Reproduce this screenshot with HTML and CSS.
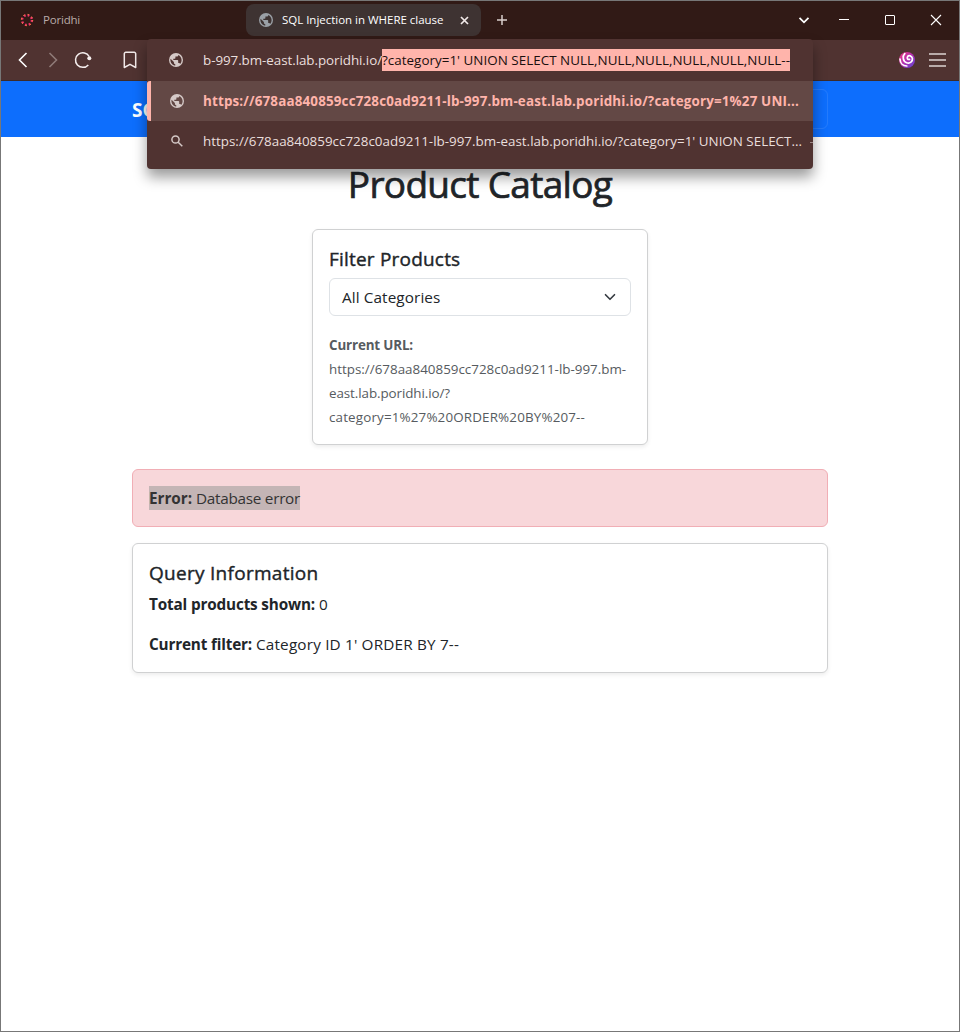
FILE: index.html
```html
<!DOCTYPE html>
<html lang="en">
<head>
<meta charset="utf-8">
<title>SQL Injection in WHERE clause</title>
<link rel="stylesheet" href="styles.css">
</head>
<body>
<div class="window">
  <div class="tabbar">
    <div class="tab tab-first">
      <svg class="ring" width="14" height="14" viewBox="0 0 14 14" fill="none"><circle cx="7" cy="7" r="4.900" stroke="#f0306b" stroke-width="2.300" stroke-dasharray="1.900 1.950"/><circle cx="7" cy="7" r="5.700" stroke="#f58a3c" stroke-width="1" stroke-dasharray="1.400 3.080"/></svg>
      <span class="t-tab1">Poridhi</span>
    </div>
    <div class="tab tab-active">
      <svg width="14" height="14" viewBox="0 0 14 14"><circle cx="7" cy="7" r="7" fill="#9aa0a6"/><path d="M6.300 12.600C3.500 12.300 1.400 9.800 1.400 7l.2-1.200 3.300 3.300v.7c0 .8.600 1.400 1.400 1.400zM11.200 10.900c-.2-.6-.7-1-1.300-1h-.7V7.800c0-.4-.3-.7-.7-.7H4.300V5.700h1.400c.4 0 .7-.3.700-.7V3.600h1.400c.8 0 1.400-.6 1.400-1.400v-.3c2 .8 3.400 2.800 3.400 5.100 0 1.500-.5 2.900-1.400 3.900z" fill="#3e3332"/></svg>
      <span class="t-tab2">SQL Injection in WHERE clause</span>
      <svg class="close" width="9" height="9" viewBox="0 0 9 9" stroke="#f1e9e8" stroke-width="1.700"><path d="M1 1l7 7M8 1l-7 7"/></svg>
    </div>
    <svg class="plus" width="12" height="12" viewBox="0 0 12 12" stroke="#d9cfcd" stroke-width="1.500"><path d="M6 1v10M1 6h10"/></svg>
    <div class="controls">
      <svg class="caret" width="12" height="12" viewBox="0 0 12 12" fill="none" stroke="#fff" stroke-width="1.800"><path d="M1.500 3.800L6 8.300l4.500-4.500"/></svg>
      <svg width="12" height="12" viewBox="0 0 12 12" stroke="#fff"><path d="M1 5.500h10"/></svg>
      <svg width="12" height="12" viewBox="0 0 12 12" fill="none" stroke="#fff"><rect x="1.500" y="1.500" width="9" height="9" rx=".5"/></svg>
      <svg width="12" height="12" viewBox="0 0 12 12" stroke="#fff" stroke-width="1.100"><path d="M1 1l10 10M11 1L1 11"/></svg>
    </div>
  </div>
  <div class="toolbar">
    <svg class="back" width="10" height="16" viewBox="0 0 10 16" fill="none" stroke="#fff" stroke-width="1.600"><path d="M8.500 1L1.500 8l7 7"/></svg>
    <svg class="fwd" width="10" height="16" viewBox="0 0 10 16" fill="none" stroke="#8f7a77" stroke-width="1.600"><path d="M1.500 1l7 7-7 7"/></svg>
    <svg class="reload" width="18" height="18" viewBox="0 0 18 18" fill="none" stroke="#f6efee" stroke-width="1.500"><path d="M15.200 5.500A7.300 7.300 0 1 0 14.300 13.900"/><circle cx="15.300" cy="7.300" r="2" fill="#f6efee" stroke="none"/></svg>
    <svg class="mark" width="14" height="18" viewBox="0 0 14 18" fill="none" stroke="#f1e9e8" stroke-width="1.500" stroke-linejoin="round"><path d="M1.300 16.500V2.800a1.500 1.500 0 0 1 1.500-1.500h8.400a1.500 1.500 0 0 1 1.500 1.500v13.700L7 13.300z"/></svg>
    <div class="right">
      <svg width="16" height="16" viewBox="0 0 16 16" fill="none"><defs><linearGradient id="g" x1="0" y1="0" x2="1" y2="1"><stop offset="0" stop-color="#f03a78"/><stop offset=".5" stop-color="#b32fb2"/><stop offset="1" stop-color="#5848d8"/></linearGradient></defs><circle cx="8" cy="8" r="8" fill="url(#g)"/><path d="M1 7C1.200 11.500 4.200 14 7.800 14M5.800 1.600C3.300 4 3.800 9.300 7.600 10.700c3.400 1.200 6.300-1.400 5.800-4.300S9.600 3 8.600 4.700s.3 3.200 1.900 2.700" stroke="#fff" stroke-width="1.700" stroke-linecap="round"/></svg>
      <svg width="17" height="14" viewBox="0 0 17 14" stroke="#dcd3d1" stroke-width="1.500"><path d="M0 1h17M0 7h17M0 13h17"/></svg>
    </div>
  </div>
  <div class="navbar"><span class="brand">SQ</span><span class="toggler"></span></div>
  <main class="page">
    <h1><span class="t-h1">Product Catalog</span></h1>
    <section class="card filter">
      <h5><span class="t-filter">Filter Products</span></h5>
      <div class="select"><span class="t-all">All Categories</span>
        <svg width="16" height="12" viewBox="0 0 16 16" fill="none" stroke="#343a40" stroke-width="2.200" stroke-linecap="round" stroke-linejoin="round"><path d="m2 5 6 6 6-6"/></svg></div>
      <div class="url">
        <div><b class="t-cur">Current URL:</b></div>
        <div><span>https://678aa840859cc728c0ad9211-lb-997.bm-</span></div>
        <div><span class="t-u2">east.lab.poridhi.io/?</span></div>
        <div><span class="t-u3">category=1%27%20ORDER%20BY%207--</span></div>
      </div>
    </section>
    <div class="alert"><span class="sel"><b class="t-err">Error:</b><span class="t-db">Database error</span></span></div>
    <section class="card info">
      <h5><span class="t-query">Query Information</span></h5>
      <p><b class="t-total">Total products shown:</b><span>0</span></p>
      <p><b class="t-cf">Current filter:</b><span class="t-cat">Category ID 1' ORDER BY 7--</span></p>
    </section>
  </main>
  <div class="omnibox">
    <div class="row input">
      <svg class="globe" width="14" height="14" viewBox="0 0 14 14"><circle cx="7" cy="7" r="7" fill="#d5c9c7"/><path d="M6.300 12.600C3.500 12.300 1.400 9.800 1.400 7l.2-1.200 3.300 3.300v.7c0 .8.600 1.400 1.400 1.400zM11.200 10.900c-.2-.6-.7-1-1.300-1h-.7V7.800c0-.4-.3-.7-.7-.7H4.300V5.700h1.400c.4 0 .7-.3.700-.7V3.600h1.400c.8 0 1.400-.6 1.400-1.400v-.3c2 .8 3.400 2.800 3.400 5.100 0 1.500-.5 2.900-1.400 3.900z" fill="#503331"/></svg>
      <span class="t-o1">b-997.bm-east.lab.poridhi.io/</span><span class="hl">?category=1' UNION SELECT NULL,NULL,NULL,NULL,NULL,NULL--</span>
    </div>
    <div class="row active">
      <svg class="globe" width="14" height="14" viewBox="0 0 14 14"><circle cx="7" cy="7" r="7" fill="#d5c9c7"/><path d="M6.300 12.600C3.500 12.300 1.400 9.800 1.400 7l.2-1.200 3.300 3.300v.7c0 .8.600 1.400 1.400 1.400zM11.200 10.900c-.2-.6-.7-1-1.300-1h-.7V7.800c0-.4-.3-.7-.7-.7H4.300V5.700h1.400c.4 0 .7-.3.700-.7V3.600h1.400c.8 0 1.400-.6 1.400-1.400v-.3c2 .8 3.400 2.800 3.400 5.100 0 1.500-.5 2.900-1.400 3.900z" fill="#634845"/></svg>
      <b class="t-o3">https://678aa840859cc728c0ad9211-lb-997.bm-east.lab.poridhi.io/?category=1%27 UNI...</b>
    </div>
    <div class="row search">
      <svg class="lens" width="12" height="12" viewBox="0 0 12 12" fill="none" stroke="#d5c9c7" stroke-width="1.500"><circle cx="4.500" cy="4.500" r="3.600"/><path d="M7.200 7.200L11.300 11.300"/></svg>
      <span class="t-o4">https://678aa840859cc728c0ad9211-lb-997.bm-east.lab.poridhi.io/?category=1' UNION SELECT...</span><span class="dash"></span>
    </div>
  </div>
</div>
</body>
</html>
```
FILE: styles.css
```css
* { box-sizing: border-box; }
body { margin: 0; font-family: "Open Sans", "Noto Sans", sans-serif; color: #212529; font-size: 15.3px; line-height: 24px; }
.window { position: relative; height: 1032px; border: 1px solid #777; background: #fff; overflow: hidden; }
svg { display: block; flex: none; }
h1, h5, p { margin: 0; }
span, b { white-space: nowrap; }
b { font-weight: 700; }

/* Browser chrome */
.tabbar { height: 39px; background: #311a16; display: flex; align-items: flex-start; }
.tab { display: flex; align-items: center; height: 32px; margin-top: 3px; font-size: 11.5px; line-height: 32px; }
.tab-first { width: 245px; padding-left: 19px; gap: 9px; color: #b9aba8; }
.tab-active { width: 235px; padding-left: 13px; gap: 9px; background: #3e3332; border-radius: 8px; color: #fff; }
.t-tab1 { letter-spacing: -.2px; }
.t-tab2 { letter-spacing: -.019px; }
.close { margin-left: 8px; }
.plus { margin: 13px 0 0 15px; }
.controls { margin: 13px 17px 0 auto; display: flex; gap: 34px; }
.caret { margin-right: -6px; }
.toolbar { height: 41px; background: #503331; border-bottom: 1px solid #3d2b29; display: flex; align-items: center; padding-left: 17px; }
.fwd { margin-left: 20px; }
.reload { margin-left: 16px; }
.mark { margin-left: 31px; }
.right { margin: 0 13px 0 auto; display: flex; align-items: center; gap: 14px; }

/* Page */
.navbar { height: 56px; background: #0d6efd; display: flex; justify-content: space-between; align-items: center; padding: 0 131px; color: #fff; }
.brand { padding-top: 2px; font-weight: 700; font-size: 19px; line-height: 28px; }
.toggler { width: 56px; height: 40px; border: 1px solid rgba(255,255,255,.1); border-radius: 6px; }
.page { padding: 23px 131px 0; display: flex; flex-direction: column; }
h1 { font-size: 37px; line-height: 48px; font-weight: 400; text-align: center; margin-bottom: 21px; -webkit-text-stroke: .7px #212529; }
h5 { font-size: 19px; line-height: 24px; font-weight: 400; margin-bottom: 7px; padding-top: 1px; -webkit-text-stroke: .4px #212529; }
.t-h1 { letter-spacing: -.7px; }
.t-filter { letter-spacing: .2px; }
.t-query { letter-spacing: .28px; }
.t-all { letter-spacing: .1px; }
.card { border: 1px solid #d0d1d2; border-radius: 6px; padding: 16px; background: #fff; box-shadow: 0 2px 4px rgba(0,0,0,.075); }
.filter { width: 336px; align-self: center; margin-bottom: 24px; padding-bottom: 15px; }
.select { height: 38px; border: 1px solid #dee2e6; border-radius: 6px; display: flex; align-items: center; justify-content: space-between; padding: 0 12px; margin-bottom: 17px; }
.url { font-size: 13.4px; color: #565b60; }
.t-cur { letter-spacing: -.15px; }
.t-u2 { letter-spacing: -.08px; }
.t-u3 { letter-spacing: .156px; }
.alert { height: 58px; border: 1px solid #f1aeb5; border-radius: 6px; background: #f8d7da; padding: 16px; margin-bottom: 16px; color: #333; }
.sel { display: flex; width: max-content; gap: 4px; background: #c4b5b5; height: 24px; }
.t-err { letter-spacing: -.04px; }
.t-db { letter-spacing: -.27px; }
.info p { display: flex; gap: 4px; }
.info p + p { margin-top: 16px; }
.t-total { letter-spacing: -.16px; }
.t-cf { letter-spacing: -.176px; }
.t-cat { letter-spacing: .172px; }

/* Address bar suggestions */
.omnibox { position: absolute; left: 146px; top: 38px; width: 666px; height: 130px; background: #503331; border-radius: 4px; box-shadow: 0 8px 14px rgba(0,0,0,.4); font-size: 13.4px; color: #eadfdd; }
.row { display: flex; align-items: center; height: 40px; }
.input { height: 42px; padding-left: 22px; }
.globe { margin-right: 20px; }
.t-o1 { letter-spacing: -.063px; }
.hl { background: #ffb4ab; color: #1a0f0e; height: 22px; line-height: 22px; letter-spacing: .033px; }
.active { background: #634845; border-left: 4px solid #ffb4ab; border-radius: 3px 0 0 3px; padding-left: 19px; color: #ffb4ab; }
.active .globe { margin-right: 19px; }
.t-o3 { letter-spacing: .162px; }
.search { padding-left: 24px; }
.lens { margin-right: 20px; }
.t-o4 { letter-spacing: .007px; }
.dash { width: 3px; height: 1px; background: #9c8886; margin: 3px 0 0 auto; }
```
